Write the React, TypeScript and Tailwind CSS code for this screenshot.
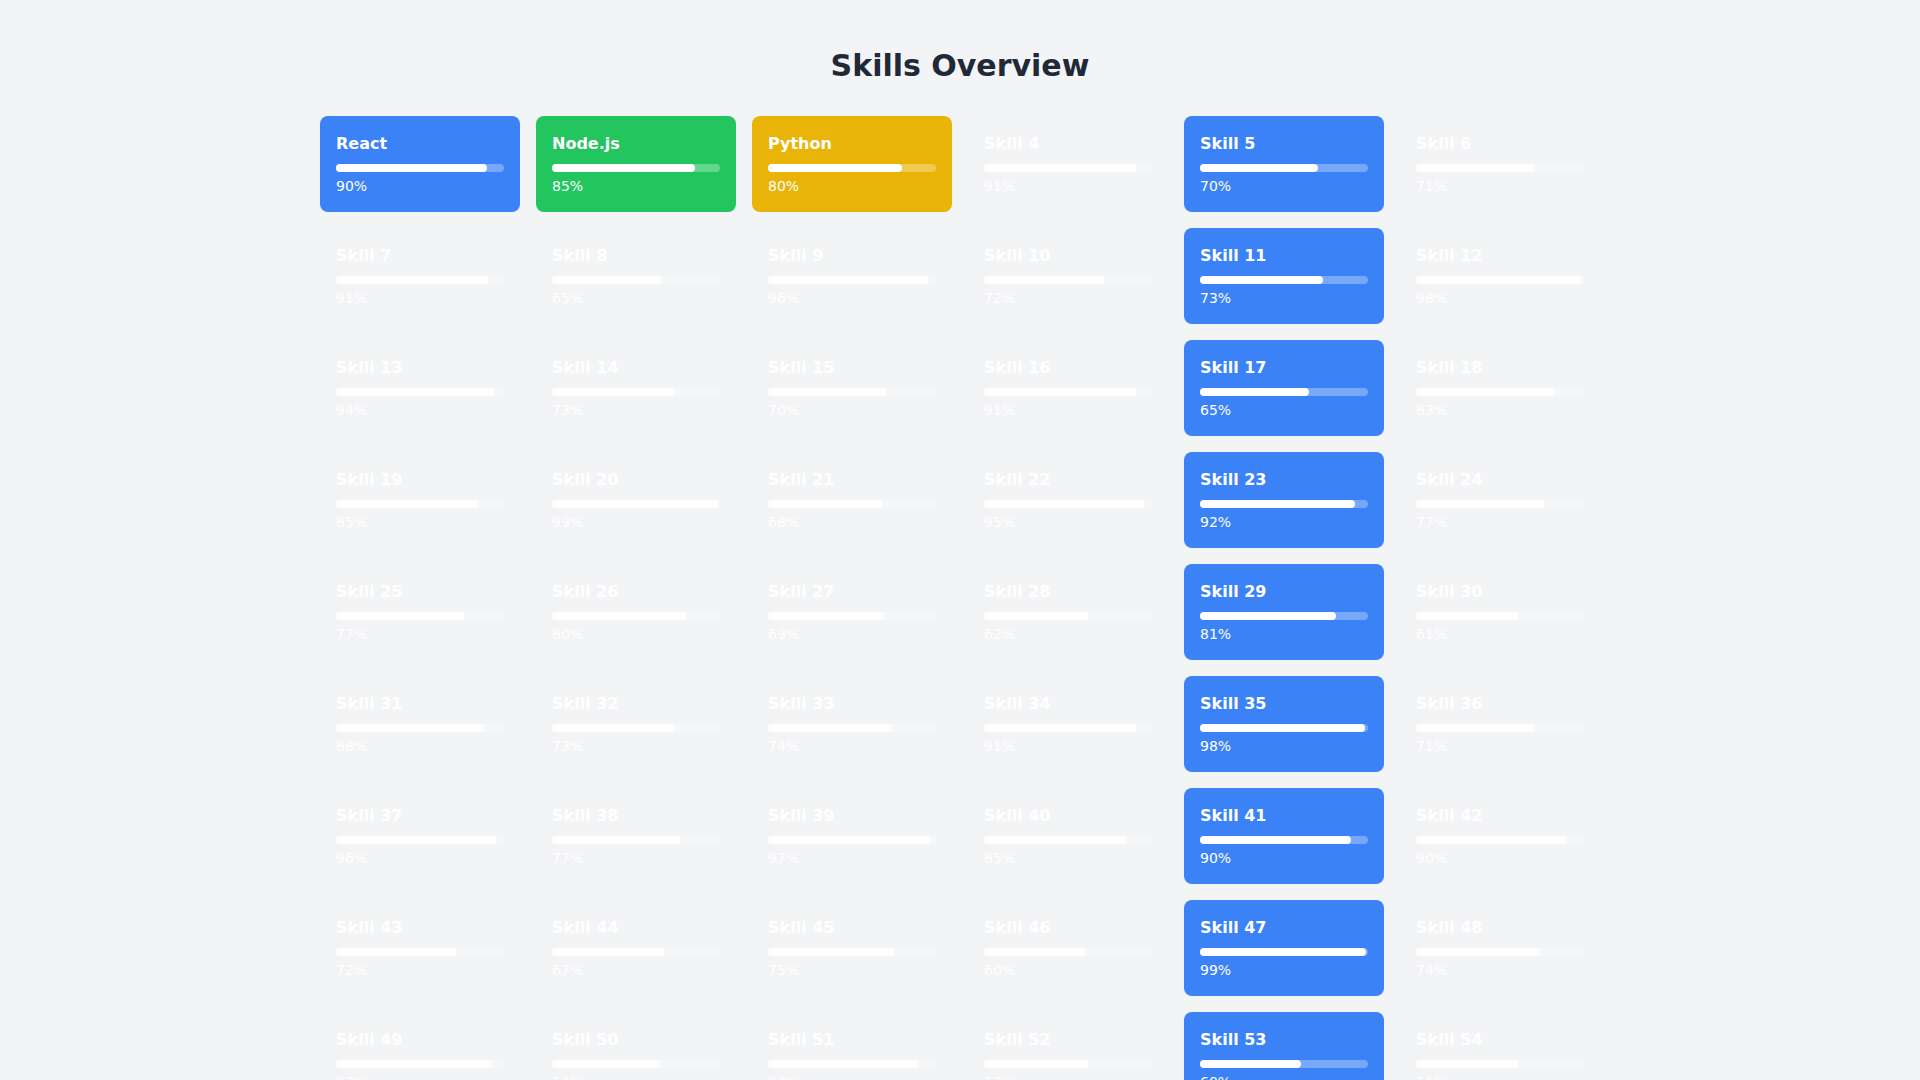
import React from "react";

type Skill = { name: string; level: number; color?: string };

const values = [
  90, 85, 80, 91, 70, 71,
  91, 65, 96, 72, 73, 98,
  94, 73, 70, 91, 65, 83,
  85, 99, 68, 95, 92, 77,
  77, 80, 69, 62, 81, 61,
  88, 73, 74, 91, 98, 71,
  96, 77, 97, 85, 90, 90,
  72, 67, 75, 60, 99, 74,
  93, 64, 90, 62, 60, 61,
];

const named: Record<number, { name: string; color: string }> = {
  0: { name: "React", color: "bg-[#3b82f6]" },
  1: { name: "Node.js", color: "bg-[#22c55e]" },
  2: { name: "Python", color: "bg-[#eab308]" },
};

const skills: Skill[] = values.map((level, i) => {
  if (named[i]) return { name: named[i].name, level, color: named[i].color };
  // every fifth column is highlighted
  if (i % 6 === 4) return { name: `Skill ${i + 1}`, level, color: "bg-[#3b82f6]" };
  return { name: `Skill ${i + 1}`, level };
});

function SkillCard({ skill }: { skill: Skill }) {
  return (
    <div className={`rounded-lg p-4 text-white ${skill.color ?? ""}`}>
      <h3 className="text-base font-bold leading-6">{skill.name}</h3>
      <div className="mt-2 h-2 w-full rounded-full bg-white/30">
        <div className="h-2 rounded-full bg-white" style={{ width: `${skill.level}%` }} />
      </div>
      <p className="mt-1 text-sm">{skill.level}%</p>
    </div>
  );
}

export default function App() {
  return (
    <div className="min-h-screen bg-[#f3f4f6] py-12 font-['DejaVu_Sans',sans-serif]">
      <div className="mx-auto max-w-7xl">
        <h1 className="mb-8 text-center text-3xl font-bold text-[#1f2937]">Skills Overview</h1>
        <div className="grid grid-cols-6 gap-4">
          {skills.map((s) => (
            <SkillCard key={s.name} skill={s} />
          ))}
        </div>
      </div>
    </div>
  );
}
